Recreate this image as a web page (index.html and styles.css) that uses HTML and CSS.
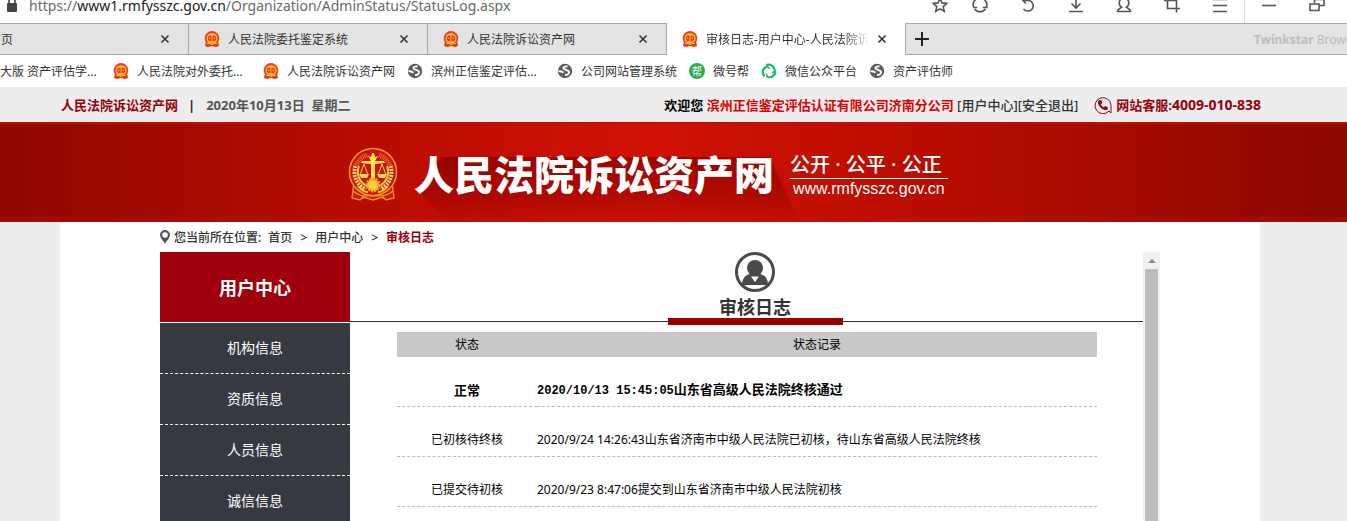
FILE: index.html
```html
<!DOCTYPE html>
<html lang="zh-CN">
<head>
    <meta charset="utf-8">
    <title>审核日志-用户中心-人民法院诉讼资产网</title>
    <meta name="viewport" content="width=device-width, initial-scale=1">
<link rel="stylesheet" href="styles.css">
</head>
<body>

  <svg class="symbols" aria-hidden="true">
    <symbol id="court" viewBox="0 0 16 16">
      <path d="M2 10h12l1 5-3 1-4-1-4 1-3-1z" fill="#e0391c"/>
      <circle cx="8" cy="7.300" r="7.300" fill="#e8401c"/>
      <circle cx="8" cy="7.500" r="5.600" fill="#ffae2e"/>
      <path d="M4 9V6.500a2 2 0 0 1 3.500-1.200V10H5zM12 9V6.500a2 2 0 0 0-3.500-1.200V10H11z" fill="#e2401a"/>
      <path d="M5.200 8V6.500h1V8zM9.800 8V6.500h1V8z" fill="#ffcf4a"/>
      <path d="M3 12.500h3l2 1 2-1h3" fill="none" stroke="#ffb52e"/>
    </symbol>
    <symbol id="globe" viewBox="0 0 16 16">
      <circle cx="8" cy="8" r="7.200" fill="#5c5c5c"/>
      <path d="M10.500 3.500C8 3 6 4 6.500 5.500S12 7 12 9s-2 3-4 3" fill="none" stroke="#fff" stroke-width="1.900"/>
      <path d="M1.500 8c2 0 3.500.5 5 1.800" fill="none" stroke="#fff" stroke-width="1.900"/>
    </symbol>
    <symbol id="cross" viewBox="0 0 10 10">
      <path d="M1.500 1.500l7 7M8.500 1.500l-7 7" stroke="#333" stroke-width="1.600"/>
    </symbol>
  </svg>

  <div class="browser">
    <div class="address">
      <svg class="lock" viewBox="0 0 12 16"><path d="M3 7V4a3 3 0 0 1 6 0v3" fill="none" stroke="#444" stroke-width="1.600"/><rect x="1" y="6" width="10" height="9" rx="1" fill="#444"/></svg>
      <div class="url">https://<b>www1.rmfysszc.gov.cn</b>/Organization/AdminStatus/StatusLog.aspx</div>
      <div class="tools">
        <button class="star" aria-label="收藏"><svg viewBox="0 0 18 18"><path d="M9 2.500l2 4.400 4.700.5-3.500 3.200 1 4.700L9 12.900l-4.200 2.400 1-4.700-3.500-3.200 4.700-.5z"/></svg></button>
        <button aria-label="刷新"><svg viewBox="0 0 18 18"><path d="M2.500 11a6.800 6.800 0 0 1 4-8.500M11.500 2.500a6.800 6.800 0 0 1 4 8.500M14.500 13a6.800 6.800 0 0 1-11 0M15.800 7.500v4h-4M2.200 11.500h4"/></svg></button>
        <button aria-label="撤销"><svg viewBox="0 0 18 18"><path d="M4 4.500h6a5.400 5.400 0 1 1-5.500 8.500M7 1.500l-3 3 3 3"/></svg></button>
        <button aria-label="下载"><svg viewBox="0 0 18 18"><path d="M9 1v10.500M4.500 7.500L9 12l4.500-4.500M2 15.500h14"/></svg></button>
        <button aria-label="用户"><svg viewBox="0 0 18 18"><path d="M9 2a5 5 0 0 0-2.500 9.200c-2 1-3.500 2-4 4.300h13c-.5-2.300-2-3.300-4-4.300A5 5 0 0 0 9 2z"/></svg></button>
        <button aria-label="截图"><svg viewBox="0 0 18 18"><path d="M4.500 1v11.500H17M1 4.500h12.500V16.500"/></svg></button>
        <button aria-label="菜单"><svg viewBox="0 0 18 18"><path d="M2 3.500h14M2 9.500h14M2 15.500h14"/></svg></button>
        <span class="divider"></span>
        <button aria-label="最小化"><svg viewBox="0 0 18 18"><path d="M2 9.500h14"/></svg></button>
        <button aria-label="还原"><svg viewBox="0 0 18 18"><path d="M6.500 7V3.500H16v6h-4.500M2 8h9v6.500H2z"/></svg></button>
      </div>
    </div>

    <div class="tabs">
      <div class="tab">
        <svg class="icon"><use href="#court"/></svg><a href="#">首页</a>
        <button class="close" aria-label="关闭"><svg><use href="#cross"/></svg></button>
      </div>
      <div class="tab">
        <svg class="icon"><use href="#court"/></svg><a href="#">人民法院委托鉴定系统</a>
        <button class="close" aria-label="关闭"><svg><use href="#cross"/></svg></button>
      </div>
      <div class="tab">
        <svg class="icon"><use href="#court"/></svg><a href="#">人民法院诉讼资产网</a>
        <button class="close" aria-label="关闭"><svg><use href="#cross"/></svg></button>
      </div>
      <div class="tab active">
        <svg class="icon"><use href="#court"/></svg><a href="#">审核日志-用户中心-人民法院诉讼资产网</a>
        <button class="close" aria-label="关闭"><svg><use href="#cross"/></svg></button>
      </div>
      <div class="tabs-end">
        <button class="plus" aria-label="新标签页"><svg viewBox="0 0 14 14"><path d="M7 0v14M0 7h14" stroke="#222" stroke-width="2"/></svg></button>
        <div class="brand"><b>Twinkstar</b> Browser</div>
      </div>
    </div>

    <div class="bookmarks">
      <a class="first" href="#">大版 资产评估学...</a>
      <a class="cut" href="#"><svg class="icon"><use href="#court"/></svg><span>人民法院对外委托...</span></a>
      <a href="#"><svg class="icon"><use href="#court"/></svg><span>人民法院诉讼资产网</span></a>
      <a class="cut" href="#"><svg class="icon"><use href="#globe"/></svg><span>滨州正信鉴定评估...</span></a>
      <a href="#"><svg class="icon"><use href="#globe"/></svg><span>公司网站管理系统</span></a>
      <a href="#"><i class="bang">帮</i><span>微号帮</span></a>
      <a href="#"><svg class="icon" viewBox="0 0 16 16"><g fill="none" stroke="#1cba6c" stroke-width="2.200" stroke-linecap="round"><path d="M3 12.500C.5 9 2 5 6 3.500"/><path d="M6 1.800c4-.8 7.500 1.500 7.800 5.700"/><path d="M14.500 9c-.5 3.500-4 6-8 5"/><path d="M6 3.500l2.500 1.700M13.800 7.500L11.500 10M6.500 14l-1-3" stroke-width="1.500"/></g></svg><span>微信公众平台</span></a>
      <a href="#"><svg class="icon"><use href="#globe"/></svg><span>资产评估师</span></a>
    </div>
  </div>

  <div class="topbar">
    <a class="site" href="#">人民法院诉讼资产网</a>
    <span class="bar">|</span>
    <span class="date">2020年10月13日&nbsp; 星期二</span>
    <div class="welcome">欢迎您 <a class="company" href="#">滨州正信鉴定评估认证有限公司济南分公司</a> <a href="#">[用户中心]</a><a href="#">[安全退出]</a></div>
    <div class="phone">
      <svg viewBox="0 0 18 18"><path d="M15 15A8 8 0 1 1 17 9v8z" fill="none" stroke="#98000f"/><path d="M5.500 4l2 .3.700 2.700-1.400 1.200c.6 1.500 1.600 2.500 3 3.100l1.300-1.200 2.500.9.300 1.900c-1 1.300-2.500 1.500-4.500.6C6.500 12 4.500 9.500 4 7c-.2-1.500.4-2.500 1.500-3z" fill="#98000f"/></svg>
      <div>网站客服:<span class="number">4009-010-838</span></div>
    </div>
  </div>

  <div class="banner">
    <svg class="emblem" viewBox="0 0 50 56">
      <path d="M6 36l-2 15 8 2 3-3 10 3 10-3 3 3 8-2-2-15z" fill="#c9180c" stroke="#f08a28" stroke-width="1.500"/>
      <circle cx="25" cy="25" r="23.500" fill="#c9140c" stroke="#f09a2c" stroke-width="1.500"/>
      <path d="M31 8a18 18 0 0 1 11 11M19 8A18 18 0 0 0 8 19" fill="none" stroke="#e8702c" stroke-width="5" stroke-dasharray="1 1"/>
      <path d="M7.500 19a18.500 18.500 0 0 0 10 23M42.500 19a18.500 18.500 0 0 1-10 23" fill="none" stroke="#f8d888" stroke-width="4" stroke-dasharray="2 1"/>
      <path d="M11 19a15.500 15.500 0 0 0 8 20M39 19a15.500 15.500 0 0 1-8 20" fill="none" stroke="#ffc82c" stroke-width="2"/>
      <path d="M24 6h2l1 4 3-1-3 5h9l1 2-9 1h-1v15h-4V17h-1l-9-1 1-2h9l-3-5 3 1z" fill="#ffe14a"/>
      <path d="M16 17l-4 11h8zM34 17l-4 11h8z" fill="none" stroke="#f9d54a"/>
      <path d="M11 27h10l-2 4h-6zM29 27h10l-2 4h-6z" fill="#ffe14a"/>
      <circle cx="25" cy="38" r="6" fill="#ffd035" stroke="#f0a426" stroke-width="3" stroke-dasharray="2 1"/>
      <path d="M10 39c3 4 6 6 10 6M40 39c-3 4-6 6-10 6" fill="none" stroke="#ffd035" stroke-width="2"/>
      <path d="M5 44c5 5 10 5 20 5s15 0 20-5M15 48v4M35 48v4" fill="none" stroke="#f08a28" stroke-width="1.500"/>
    </svg>
    <h1>人民法院诉讼资产网</h1>
    <div class="slogan">
      <p>公开 · 公平 · 公正</p>
      <p class="domain">www.rmfysszc.gov.cn</p>
    </div>
  </div>

  <div class="page">
    <div class="crumbs">
      <svg viewBox="0 0 10 14"><path d="M5 0a5 5 0 0 0-5 5c0 3 3 5 5 9 2-4 5-6 5-9a5 5 0 0 0-5-5zm0 2.200a2.800 2.800 0 1 1 0 5.600 2.800 2.800 0 0 1 0-5.600z" fill="#555" fill-rule="evenodd"/></svg>
      <span class="here">您当前所在位置:</span>
      <a href="#">首页</a><span class="gt">&gt;</span><a href="#">用户中心</a><span class="gt">&gt;</span><a class="now" href="#">审核日志</a>
    </div>

    <div class="columns">
      <div class="sidebar">
        <h2>用户中心</h2>
        <a href="#">机构信息</a>
        <a href="#">资质信息</a>
        <a href="#">人员信息</a>
        <a href="#">诚信信息</a>
      </div>

      <div class="content">
        <div class="heading">
          <div class="heading-tab">
            <svg viewBox="0 0 40 40"><circle cx="20" cy="20" r="18.500" fill="#fff" stroke="#4a4a4a" stroke-width="3"/><circle cx="20" cy="16" r="8" fill="#4a4a4a"/><path d="M7 33c0-6 3-10 8-11h10c5 1 8 5 8 11z" fill="#4a4a4a"/><path d="M16 24.500h8L20 30z" fill="#fff"/></svg>
            <h3>审核日志</h3>
          </div>
        </div>
        <table class="log">
          <thead>
            <tr><th class="state">状态</th><th>状态记录</th></tr>
          </thead>
          <tbody>
            <tr class="latest"><td class="state">正常</td><td><span class="time">2020/10/13 15:45:05</span>山东省高级人民法院终核通过</td></tr>
            <tr><td class="state">已初核待终核</td><td>2020/9/24 14:26:43山东省济南市中级人民法院已初核，待山东省高级人民法院终核</td></tr>
            <tr><td class="state">已提交待初核</td><td>2020/9/23 8:47:06提交到山东省济南市中级人民法院初核</td></tr>
          </tbody>
        </table>
      </div>

      <div class="scroll">
        <span class="up"></span>
        <div class="thumb"></div>
      </div>
    </div>
  </div>

</body>
</html>
```
FILE: styles.css
```css
* {
  box-sizing: border-box;
}

body {
  margin: 0;
  height: 100vh;
  overflow: hidden;
  display: flex;
  flex-direction: column;
  font-family: "Noto Sans", "Noto Sans CJK SC", sans-serif;
  font-size: 12px;
  color: #333;
  background-color: #ededed;
}

a {
  color: inherit;
  text-decoration: none;
}

button {
  padding: 0;
  border: 0;
  background: none;
}

h1, h2, h3, p {
  margin: 0;
}

svg {
  display: block;
  flex: none;
}

.symbols {
  display: none;
}

.icon {
  width: 16px;
  height: 16px;
}

/* browser bars, the address row is scrolled half out of view */
.browser {
  flex: none;
  margin-top: -13px;
  background-color: #fff;
}

.address {
  display: flex;
  align-items: center;
  height: 36px;
  padding: 0 6px;
}

.lock {
  width: 12px;
  height: 16px;
  margin-right: 11px;
}

.url {
  font-size: 14px;
  color: #6a6a6a;
  white-space: nowrap;
}

.url b {
  font-weight: normal;
  color: #222;
}

.tools {
  display: flex;
  align-items: stretch;
  height: 36px;
  margin-left: auto;
}

.tools button {
  display: flex;
  align-items: center;
  justify-content: center;
  width: 48px;
}

.tools .star {
  width: 32px;
}

.tools svg {
  width: 18px;
  height: 18px;
  fill: none;
  stroke: #555;
  stroke-width: 1.6;
}

.divider {
  width: 1px;
  background-color: #ddd;
}

.tabs {
  display: flex;
  height: 32px;
  margin-left: -50px;
}

.tab {
  display: flex;
  align-items: center;
  flex: none;
  width: 239px;
  padding: 0 18px 0 15px;
  border: 1px solid #a9a9a9;
  border-left: 0;
  background-color: #e3e3e3;
}

.tab a {
  flex: 1;
  margin-left: 8px;
  overflow: hidden;
  white-space: nowrap;
}

.tab.active {
  border-color: #fff #a9a9a9 #fff #fff;
  background-color: #fff;
}

.tab.active a {
  -webkit-mask-image: linear-gradient(to right, #000 85%, transparent);
  mask-image: linear-gradient(to right, #000 85%, transparent);
}

.close svg {
  width: 10px;
  height: 10px;
}

.close {
  margin-left: 8px;
}

.tabs-end {
  display: flex;
  align-items: center;
  flex: 1;
  min-width: 0;
  padding-left: 9px;
  border-top: 1px solid #a9a9a9;
  border-bottom: 1px solid #a9a9a9;
  background-color: #e3e3e3;
}

.plus svg {
  width: 14px;
  height: 14px;
}

.brand {
  width: 93px;
  margin-left: auto;
  overflow: hidden;
  white-space: nowrap;
  color: #bcbcbc;
}

.bookmarks {
  display: flex;
  align-items: center;
  gap: 12px;
  height: 32px;
  white-space: nowrap;
}

.bookmarks a {
  display: flex;
  align-items: center;
  gap: 8px;
}

.bookmarks .first {
  width: 101px;
}

.bookmarks .cut span {
  width: 114px;
}

.bang {
  width: 16px;
  height: 16px;
  border-radius: 8px;
  background-color: #2cb04a;
  color: #fff;
  font-size: 10px;
  font-style: normal;
  line-height: 16px;
  text-align: center;
}

/* site header */
.topbar {
  display: flex;
  align-items: center;
  flex: none;
  height: 35px;
  padding: 0 86px 0 61px;
  font-size: 13px;
  font-weight: bold;
  white-space: nowrap;
}

.site, .phone {
  color: #98000f;
}

.bar {
  margin: 0 11px 0 10px;
  color: #222;
}

.date {
  color: #555;
}

.welcome {
  margin-left: auto;
  color: #000;
}

.welcome a {
  color: #333;
  font-weight: 500;
}

.welcome .company {
  color: #e00000;
  font-weight: bold;
}

.phone {
  display: flex;
  align-items: center;
  gap: 4px;
  margin-left: 16px;
}

.phone svg {
  width: 18px;
  height: 18px;
}

.number {
  font-size: 14px;
}

.banner {
  display: flex;
  align-items: center;
  flex: none;
  height: 100px;
  padding-left: 348px;
  padding-top: 4px;
  border-top: 2px solid #c01000;
  background: linear-gradient(to right, #900800, #b50b00 25%, #d01204 48%, #b80c00 70%, #8c0800);
  box-shadow: inset 0 -5px 0 rgba(200, 20, 0, 0.25);
  color: #fff;
  white-space: nowrap;
}

.emblem {
  width: 50px;
  height: 56px;
}

.banner h1 {
  position: relative;
  z-index: 0;
  margin-left: 16px;
  font-size: 40px;
  font-weight: 900;
  line-height: 56px;
}

/* long shadow under the site name */
.banner h1::before {
  content: "";
  position: absolute;
  z-index: -1;
  top: 10px;
  left: 4px;
  right: -26px;
  bottom: -19px;
  background: linear-gradient(to bottom, rgba(120, 0, 0, 0.6), rgba(140, 0, 0, 0.4) 60%, rgba(150, 0, 0, 0.05));
  clip-path: polygon(6% 0, 92% 0, 100% 100%, 8% 100%, 0 52%);
}

.slogan {
  margin-left: 16px;
  font-size: 20px;
  font-weight: 500;
  line-height: 26px;
}

.slogan .domain {
  padding: 0 3px;
  border-top: 1px solid #fff;
  font-family: "Liberation Sans", sans-serif;
  font-size: 16px;
  line-height: 20px;
}

.page {
  display: flex;
  flex-direction: column;
  flex: 1;
  min-height: 0;
  margin: 0 87px 0 60px;
  padding: 0 100px;
  background-color: #fff;
}

.crumbs {
  display: flex;
  align-items: center;
  flex: none;
  height: 30px;
  font-weight: 500;
}

.crumbs svg {
  width: 10px;
  height: 14px;
  margin-right: 4px;
}

.here {
  margin-right: 7px;
}

.gt {
  margin: 0 8px;
}

.crumbs .now {
  color: #98000f;
  font-weight: bold;
}

.columns {
  display: flex;
  flex: 1;
  min-height: 0;
}

.sidebar {
  width: 190px;
  flex: none;
  overflow: hidden;
  background-color: #363940;
  color: #fff;
  text-align: center;
}

.sidebar h2 {
  height: 71px;
  border-bottom: 1px solid #fff;
  background-color: #a0000b;
  font-size: 18px;
  line-height: 72px;
}

.sidebar a {
  display: block;
  height: 51px;
  border-bottom: 1px dashed #fff;
  font-size: 14px;
  line-height: 50px;
}

.content {
  flex: 1;
  overflow: hidden;
}

.heading {
  display: flex;
  justify-content: center;
  height: 70px;
  padding-left: 17px;
  border-bottom: 1px solid #333;
}

.heading-tab {
  display: flex;
  flex-direction: column;
  align-items: center;
  width: 175px;
  height: 73px;
  border-bottom: 7px solid #980000;
}

.heading-tab svg {
  width: 40px;
  height: 40px;
}

.heading-tab h3 {
  font-size: 18px;
  line-height: 30px;
}

.log {
  width: calc(100% - 93px);
  margin: 10px 46px 0 47px;
  border-spacing: 0;
  table-layout: fixed;
  color: #000;
  line-height: 18px;
}

.log th {
  height: 25px;
  padding: 0;
  background-color: #c9c9c9;
  font-weight: normal;
}

.log td {
  height: 50px;
  padding: 16px 0 0;
  border-bottom: 1px dashed #bbb;
}

.log .state {
  width: 140px;
  text-align: center;
}

.latest {
  font-size: 13px;
  font-weight: bold;
}

.time {
  font-family: "Liberation Mono", monospace;
  font-size: 12px;
}

/* scrollbar of the content frame */
.scroll {
  display: flex;
  flex-direction: column;
  width: 17px;
  flex: none;
  padding: 0 2px;
  background-color: #f1f1f1;
}

.up {
  align-self: center;
  margin: 7px 0 6px;
  border: 4px solid transparent;
  border-top: 0;
  border-bottom-color: #8a8a8a;
}

.thumb {
  flex: 1;
  background-color: #bdbdbd;
}
```
